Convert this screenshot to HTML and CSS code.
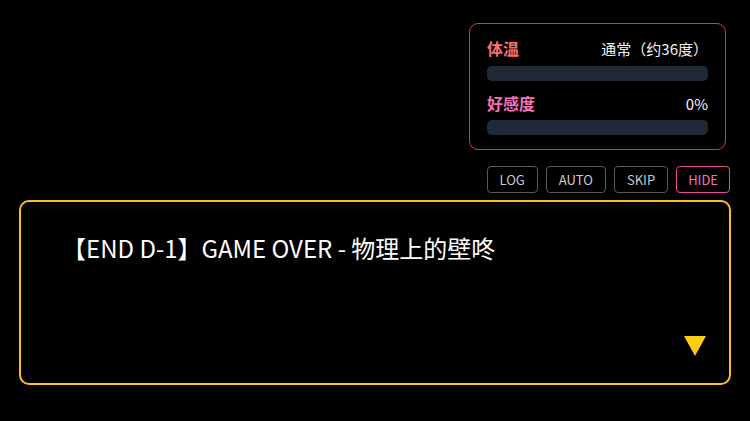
FILE: index.html
```html
<!DOCTYPE html>
<html lang="zh">
<head>
<meta charset="utf-8">
<link rel="stylesheet" href="styles.css">
</head>
<body>
<div class="screen">
  <div class="status">
    <div class="row">
      <span class="label temp">体温</span>
      <span class="value">通常（约36度）</span>
    </div>
    <div class="bar"></div>
    <div class="row second">
      <span class="label love">好感度</span>
      <span class="value">0%</span>
    </div>
    <div class="bar bar-last"></div>
  </div>
  <div class="controls">
    <button class="btn">LOG</button>
    <button class="btn">AUTO</button>
    <button class="btn">SKIP</button>
    <button class="btn btn-hide">HIDE</button>
  </div>
  <div class="dialog">
    <p class="line">【END D-1】GAME OVER - 物理上的壁咚</p>
    <span class="next"></span>
  </div>
</div>
</body>
</html>
```
FILE: styles.css
```css
html, body {
  margin: 0;
  padding: 0;
  background: #000;
}
body {
  width: 750px;
  height: 421px;
  overflow: hidden;
  font-family: "Noto Sans CJK SC", "Noto Sans", sans-serif;
  color: #fff;
}
.screen {
  display: flex;
  flex-direction: column;
  align-items: flex-end;
  padding: 23px 19px 0 19px;
}
.status {
  box-sizing: border-box;
  width: 257px;
  height: 127px;
  margin-right: 5px;
  border: 1px solid #dc3545;
  border-radius: 9px;
  padding: 13px 17px 0 17px;
  display: flex;
  flex-direction: column;
}
.row {
  height: 22px;
  display: flex;
  justify-content: space-between;
  align-items: center;
}
.row.second {
  margin-top: 11px;
}
.label {
  font-size: 16px;
  font-weight: 700;
}
.temp { color: #f87171; }
.love { color: #f472b6; }
.value {
  font-size: 15px;
  color: #f3f4f6;
}
.bar {
  margin-top: 7px;
  height: 15px;
  border-radius: 5px;
  background: #1f2937;
}
.bar-last { margin-top: 6px; }
.controls {
  display: flex;
  gap: 8px;
  margin-top: 16px;
  margin-right: 1px;
}
.btn {
  box-sizing: border-box;
  height: 27px;
  padding: 0 12px;
  background: #000;
  border: 1px solid #555a60;
  border-radius: 4px;
  color: #c8ccd2;
  font-family: "Noto Sans CJK SC", "Noto Sans", sans-serif;
  font-size: 13px;
  line-height: 25px;
}
.btn-hide {
  padding: 0 11px;
  border-color: #ec4899;
  color: #f472b6;
}
.dialog {
  position: relative;
  box-sizing: border-box;
  align-self: stretch;
  margin-top: 7px;
  height: 185px;
  border: 2px solid #fbbf24;
  border-radius: 10px;
  padding: 30px 41px 0 41px;
}
.line {
  margin: 0;
  font-size: 24px;
  line-height: 32px;
  color: #fff;
}
.next {
  position: absolute;
  right: 23px;
  bottom: 27px;
  width: 0;
  height: 0;
  border-left: 11.5px solid transparent;
  border-right: 11.5px solid transparent;
  border-top: 20px solid #facc15;
}
```
